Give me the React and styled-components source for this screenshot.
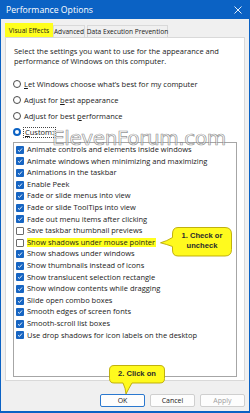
import React from "react";
import styled, { createGlobalStyle } from "styled-components";

const GlobalStyle = createGlobalStyle`
  html, body {
    margin: 0;
    padding: 0;
    background: #ffffff;
  }
  body {
    width: 250px;
    height: 413px;
    overflow: hidden;
    font-family: "Open Sans", "Noto Sans", sans-serif;
  }
`;

const effects = [
  { label: "Animate controls and elements inside windows", on: true },
  { label: "Animate windows when minimizing and maximizing", on: true },
  { label: "Animations in the taskbar", on: true },
  { label: "Enable Peek", on: true },
  { label: "Fade or slide menus into view", on: true },
  { label: "Fade or slide ToolTips into view", on: true },
  { label: "Fade out menu items after clicking", on: true },
  { label: "Save taskbar thumbnail previews", on: false },
  { label: "Show shadows under mouse pointer", on: false, marked: true },
  { label: "Show shadows under windows", on: true },
  { label: "Show thumbnails instead of icons", on: true },
  { label: "Show translucent selection rectangle", on: true },
  { label: "Show window contents while dragging", on: true },
  { label: "Slide open combo boxes", on: true },
  { label: "Smooth edges of screen fonts", on: true },
  { label: "Smooth-scroll list boxes", on: true },
  { label: "Use drop shadows for icon labels on the desktop", on: true },
];

function App() {
  return (
    <>
      <GlobalStyle />
      <Window>
        <TitleBar>
          <Title>Performance Options</Title>
          <Close>
            <svg width="8" height="8" viewBox="0 0 8 8">
              <path d="M0.5 0.5 L7.5 7.5 M7.5 0.5 L0.5 7.5" stroke="#ffffff" strokeWidth="0.9" />
            </svg>
          </Close>
        </TitleBar>

        <Body>
          <Tabs>
            <Tab $active>Visual Effects</Tab>
            <Tab $width={32}>Advanced</Tab>
            <Tab $width={81} $gap={2}>Data Execution Prevention</Tab>
          </Tabs>

          <Panel>
            <Intro>
              Select the settings you want to use for the appearance and
              <br />
              performance of Windows on this computer.
            </Intro>

            <Radios>
              <RadioRow>
                <Radio />
                <span><u>L</u>et Windows choose what’s best for my computer</span>
              </RadioRow>
              <RadioRow>
                <Radio />
                <span>Adjust for <u>b</u>est appearance</span>
              </RadioRow>
              <RadioRow>
                <Radio />
                <span>Adjust for best <u>p</u>erformance</span>
              </RadioRow>
              <RadioRow>
                <Radio $checked />
                <Focus><u>C</u>ustom:</Focus>
              </RadioRow>
            </Radios>

            <ListBox>
              {effects.map(item => (
                <Item key={item.label}>
                  <Check $on={item.on}>
                    {item.on && (
                      <svg width="6" height="6" viewBox="0 0 6 6">
                        <path d="M1 3.2 L2.4 4.5 L5 1.5" fill="none" stroke="#ffffff" strokeWidth="0.9" />
                      </svg>
                    )}
                  </Check>
                  <ItemLabel $marked={item.marked}>{item.label}</ItemLabel>
                </Item>
              ))}
            </ListBox>
          </Panel>

          <Buttons>
            <Button $primary>OK</Button>
            <Button>Cancel</Button>
            <Button $disabled>Apply</Button>
          </Buttons>
        </Body>

        <Watermark>ElevenForum.com</Watermark>

        <Callout style={{ left: 158, top: 226, width: 74, height: 32 }}>
          <svg width="74" height="32" viewBox="0 0 74 32">
            <path
              d="M19 1.5 H66 Q72.5 1.5 72.5 8 V23.5 Q72.5 30 66 30 H19 Q13.5 30 13.5 24 V20.5 Q8 18.5 1.5 16.8 Q8 15 13.5 11.5 V8 Q13.5 1.5 19 1.5 Z"
              fill="#fffa1e"
              stroke="#b9a800"
              strokeWidth="0.9"
            />
          </svg>
          <CalloutText style={{ left: 13, top: 5, width: 60 }}>
            1. Check or
            <br />
            uncheck
          </CalloutText>
        </Callout>

        <Callout style={{ left: 107, top: 364, width: 58, height: 31 }}>
          <svg width="58" height="31" viewBox="0 0 58 31">
            <path
              d="M6 1.5 H52 Q56.5 1.5 56.5 6 V14.5 Q56.5 19 52 19 H24 Q21 24 18 30 Q17.5 24 15 19 H6 Q1.5 19 1.5 14.5 V6 Q1.5 1.5 6 1.5 Z"
              fill="#fffa1e"
              stroke="#b9a800"
              strokeWidth="0.9"
            />
          </svg>
          <CalloutText style={{ left: 1, top: 5, width: 56 }}>2. Click on</CalloutText>
        </Callout>
      </Window>
    </>
  );
}

const Window = styled.div`
  position: relative;
  width: 250px;
  height: 413px;
  box-sizing: border-box;
  display: flex;
  flex-direction: column;
  background: #f0f0f0;
  border: 1px solid #0b62c4;
  border-top: none;
  border-bottom-width: 2px;
  overflow: hidden;
`;

const TitleBar = styled.div`
  height: 19px;
  margin: 0 -1px;
  padding: 0 7px 0 6px;
  display: flex;
  align-items: center;
  justify-content: space-between;
  background: #0b62c4;
  color: #ffffff;
`;

const Title = styled.span`
  font-size: 8.7px;
`;

const Close = styled.span`
  display: flex;
  margin-right: 1px;
`;

const Body = styled.div`
  flex: 1;
  display: flex;
  flex-direction: column;
  padding: 4px 4px 0 4px;
`;

const Tabs = styled.div`
  display: flex;
  align-items: flex-end;
  height: 14px;
  color: #1a1a1a;
`;

const Tab = styled.div`
  box-sizing: border-box;
  height: ${p => (p.$active ? "14px" : "12px")};
  width: ${p => (p.$active ? "48px" : `${p.$width}px`)};
  margin-left: ${p => (p.$gap ? `${p.$gap}px` : "0")};
  display: flex;
  align-items: center;
  justify-content: center;
  background: ${p => (p.$active ? "#ffff1e" : "#f0f0f0")};
  border: 1px solid ${p => (p.$active ? "#ffff1e" : "#d9d9d9")};
  border-bottom: none;
  font-size: 6.6px;
  white-space: nowrap;
`;

const Panel = styled.div`
  box-sizing: border-box;
  height: 344px;
  display: flex;
  flex-direction: column;
  padding: 8px 8px 3px 8px;
  background: #ffffff;
  border: 1px solid #d9d9d9;
  font-size: 7.5px;
  color: #1a1a1a;
`;

const Intro = styled.p`
  margin: 0;
  line-height: 10px;
  white-space: nowrap;
`;

const Radios = styled.div`
  display: flex;
  flex-direction: column;
  margin-top: 10px;
`;

const RadioRow = styled.div`
  height: 16px;
  display: flex;
  align-items: center;
  gap: 3px;
  margin-left: -1px;
  white-space: nowrap;

  u {
    text-decoration-thickness: 0.5px;
    text-underline-offset: 1px;
  }
`;

const Radio = styled.span`
  box-sizing: border-box;
  width: 8px;
  height: 8px;
  border-radius: 50%;
  background: #ffffff;
  border: ${p => (p.$checked ? "2.3px solid #0b62c4" : "0.8px solid #4a4a4a")};
`;

const Focus = styled.span`
  padding: 0 1px;
  outline: 0.8px dotted #444444;
  line-height: 9px;
`;

const ListBox = styled.div`
  flex: 1;
  margin: 2px -1px 0 -1px;
  padding: 1px 0 0 2px;
  background: #ffffff;
  border: 1px solid #a6a6a6;
`;

const Item = styled.div`
  height: 11.6px;
  display: flex;
  align-items: center;
  gap: 3px;
  white-space: nowrap;
`;

const Check = styled.span`
  box-sizing: border-box;
  width: 8px;
  height: 8px;
  flex: none;
  display: flex;
  align-items: center;
  justify-content: center;
  border-radius: 1px;
  background: ${p => (p.$on ? "#1765c2" : "#ffffff")};
  border: ${p => (p.$on ? "none" : "0.8px solid #6b6b6b")};
`;

const ItemLabel = styled.span`
  padding: 0 1px 0 0;
  line-height: 9.5px;
  background: ${p => (p.$marked ? "#ffff1e" : "transparent")};
`;

const Buttons = styled.div`
  display: flex;
  justify-content: flex-end;
  gap: 5px;
  margin-top: 13px;
`;

const Button = styled.div`
  box-sizing: border-box;
  width: 45px;
  height: 13px;
  display: flex;
  align-items: center;
  justify-content: center;
  border-radius: 2px;
  background: #fdfdfd;
  border: 1px solid ${p => (p.$primary ? "#2a78cf" : "#cfcfcf")};
  font-size: 7px;
  color: ${p => (p.$disabled ? "#a0a0a0" : "#1a1a1a")};
`;

const Watermark = styled.div`
  position: absolute;
  left: 51px;
  top: 128px;
  font-family: "DejaVu Sans", sans-serif;
  font-size: 20px;
  line-height: 20px;
  letter-spacing: -0.4px;
  color: rgba(255, 255, 255, 0.55);
  -webkit-text-stroke: 0.7px rgba(110, 110, 110, 0.75);
  pointer-events: none;
  white-space: nowrap;
`;

const Callout = styled.div`
  position: absolute;

  svg {
    position: absolute;
    left: 0;
    top: 0;
  }
`;

const CalloutText = styled.div`
  position: absolute;
  text-align: center;
  font-family: "Liberation Sans", Arial, sans-serif;
  font-weight: bold;
  font-size: 7.6px;
  line-height: 10px;
  color: #2a2a2a;
`;

export default App;
